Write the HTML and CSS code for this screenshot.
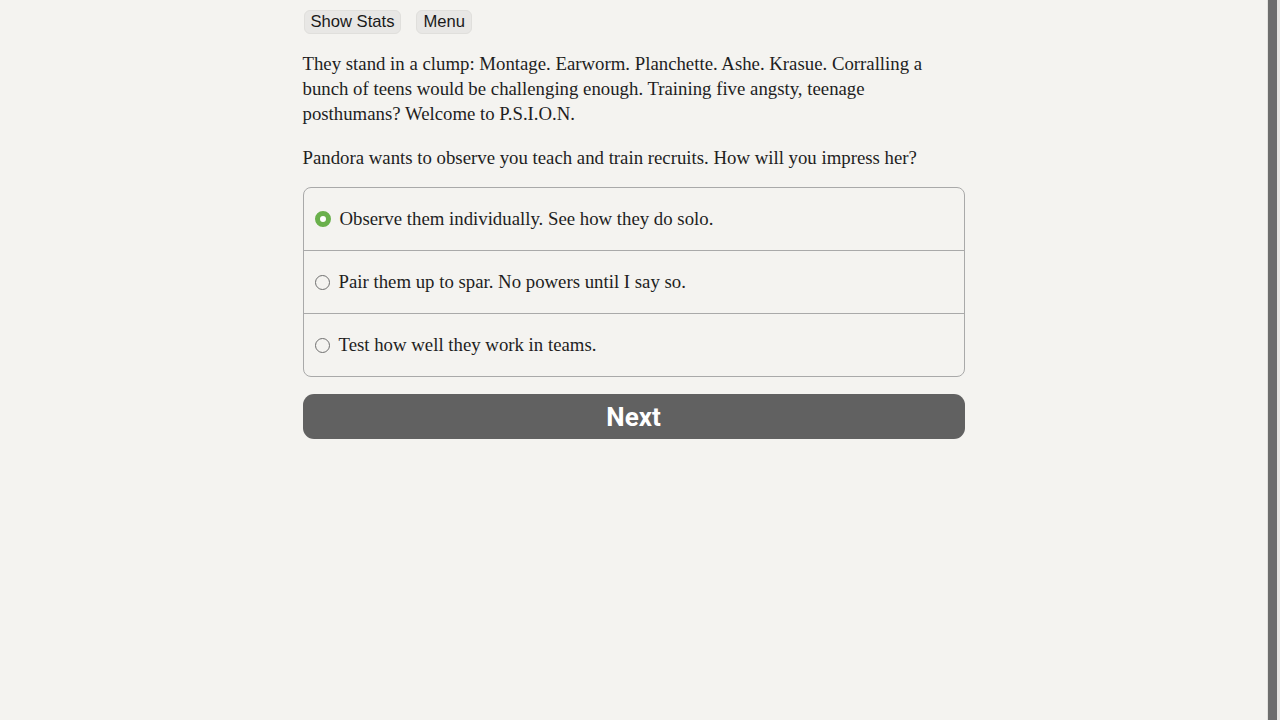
FILE: index.html
```html
<!DOCTYPE html>
<html lang="en">
<head>
  <meta charset="UTF-8" />
  <meta name="viewport" content="width=device-width, initial-scale=1.0"/>
  <title>P.S.I.O.N.</title>
  <link rel="stylesheet" href="styles.css">
</head>
<body>
  <div class="page">
    <div class="container">
      <div class="buttons">
        <button class="top-btn">Show Stats</button>
        <button class="top-btn">Menu</button>
      </div>

      <div class="text">
        <p>They stand in a clump: Montage. Earworm. Planchette. Ashe. Krasue. Corralling a bunch of teens would be challenging enough. Training five angsty, teenage posthumans? Welcome to P.S.I.O.N.</p>
        <p>Pandora wants to observe you teach and train recruits. How will you impress her?</p>
      </div>

      <form class="choices">
        <label class="choice">
          <input type="radio" name="choice" checked>
          <span class="radio"></span>
          Observe them individually. See how they do solo.
        </label>
        <label class="choice">
          <input type="radio" name="choice">
          <span class="radio"></span>
          Pair them up to spar. No powers until I say so.
        </label>
        <label class="choice">
          <input type="radio" name="choice">
          <span class="radio"></span>
          Test how well they work in teams.
        </label>
      </form>

      <button class="next">Next</button>
    </div>
  </div>
  <div class="rail"></div>
</body>
</html>
```

FILE: styles.css
```css
:root {
  --bg: #f4f3f0;
  --text: #1e1e1e;
  --border: #a9a9a9;
  --button: #e8e7e5;
  --dark: #616161;
  --green: #6ab04c;
  --font-body: 'Liberation Serif', serif;
  --font-ui: 'Liberation Sans', Arial, sans-serif;
}

html, body {
  margin: 0;
  padding: 0;
  height: 100%;
  background: var(--bg);
  color: var(--text);
  font-family: var(--font-body);
}

body {
  display: flex;
}

.page {
  flex: 1;
}

/* grey strip along the right edge */
.rail {
  width: 9px;
  border-left: 1px solid #e2e1de;
  border-right: 3px solid #e6e5e2;
  background: #6d6d6d;
}

.container {
  width: 662px;
  margin: 0 auto;
  padding-top: 10px;
}

.buttons {
  display: flex;
  gap: 15px;
  padding-left: 1px;
}

.top-btn {
  font-family: var(--font-ui);
  font-size: 16.6px;
  color: #1a1a1a;
  background: var(--button);
  border: 1px solid #e0dfdc;
  border-radius: 6px;
  padding: 2px 6px;
  height: 24px;
  line-height: 18px;
}

.text {
  margin-top: 17px;
  font-size: 18.8px;
  line-height: 25px;
}

.text p {
  margin: 0 0 19px;
}

.text p:last-child {
  margin-bottom: 0;
}

.choices {
  margin-top: 17px;
  border: 1px solid var(--border);
  border-radius: 8px;
  overflow: hidden;
}

.choice {
  display: flex;
  align-items: center;
  gap: 9px;
  height: 62px;
  padding: 0 11px;
  font-size: 18.8px;
  cursor: pointer;
}

.choice + .choice {
  border-top: 1px solid var(--border);
}

.choice input {
  display: none;
}

.radio {
  width: 13px;
  height: 13px;
  border: 1.5px solid #6f6f6f;
  border-radius: 50%;
  flex-shrink: 0;
}

.choice input:checked + .radio {
  border: 5px solid var(--green);
  width: 6px;
  height: 6px;
  background: #fff;
}

.next {
  display: block;
  width: 100%;
  height: 45px;
  margin-top: 17px;
  border: none;
  border-radius: 11px;
  background: var(--dark);
  color: #fff;
  font-family: Roboto, var(--font-ui);
  font-weight: 700;
  font-size: 26px;
  cursor: pointer;
}
```
